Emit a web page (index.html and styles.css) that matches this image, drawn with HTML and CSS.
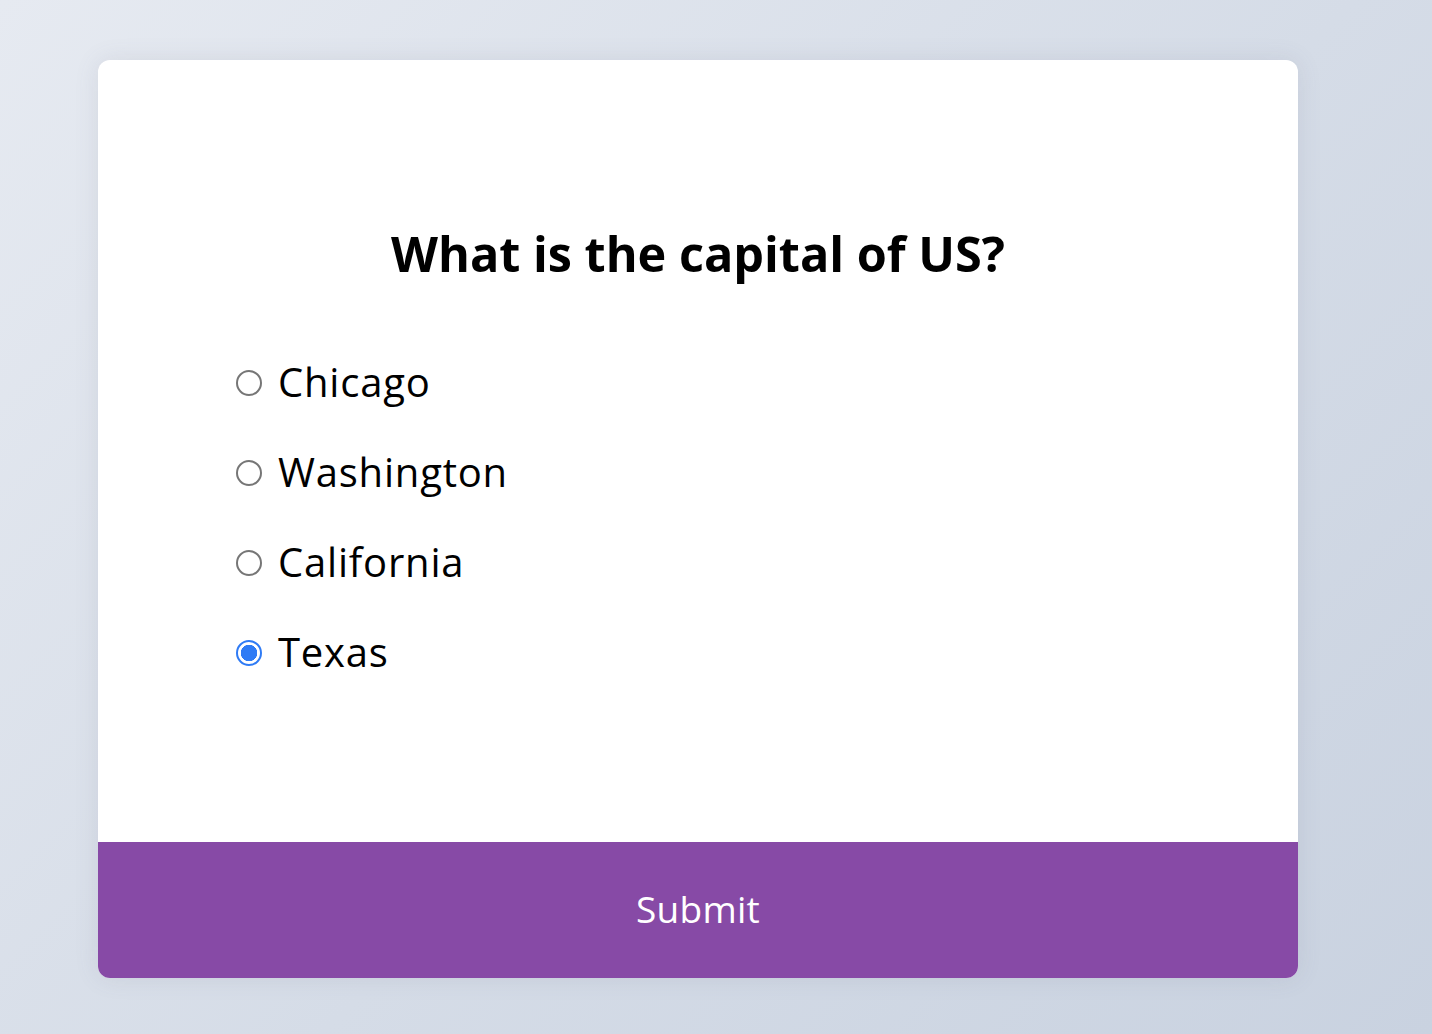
FILE: index.html
```html
<!DOCTYPE html>
<html lang="en">
<head>
<meta charset="utf-8">
<title>Quiz</title>
<link rel="stylesheet" href="styles.css">
</head>
<body>
<div class="quiz">
  <div class="quiz-body">
    <h2 class="question">What is the capital of US?</h2>
    <ul class="answers">
      <li class="answer"><input type="radio" name="a" id="a1" class="radio"><label for="a1">Chicago</label></li>
      <li class="answer"><input type="radio" name="a" id="a2" class="radio"><label for="a2">Washington</label></li>
      <li class="answer"><input type="radio" name="a" id="a3" class="radio"><label for="a3">California</label></li>
      <li class="answer"><input type="radio" name="a" id="a4" class="radio" checked><label for="a4">Texas</label></li>
    </ul>
  </div>
  <button class="submit">Submit</button>
</div>
</body>
</html>
```
FILE: styles.css
```css
html, body {
  margin: 0;
  height: 100%;
}
body {
  background: linear-gradient(135deg, #e6eaf1 0%, #d5dce7 55%, #c9d2e0 100%);
  font-family: "Open Sans", "Liberation Sans", sans-serif;
  color: #000;
  overflow: hidden;
}
.quiz {
  width: 1200px;
  margin: 60px 0 0 98px;
  background: #fff;
  border-radius: 12px;
  box-shadow: 0 0 24px rgba(100, 100, 120, 0.12);
  overflow: hidden;
}
.quiz-body {
  padding: 164px 0 144px 136px;
}
.question {
  margin: 0 136px 56px 0;
  text-align: center;
  font-size: 48.6px;
  line-height: 58px;
  font-weight: 700;
}
.answers {
  list-style: none;
  margin: 0;
  padding: 0;
}
.answer {
  height: 90px;
  display: flex;
  align-items: center;
  font-size: 40px;
  letter-spacing: 0.8px;
}
.answer label {
  margin-left: 16px;
  padding-bottom: 4px;
}
.radio {
  appearance: none;
  -webkit-appearance: none;
  margin: 0 0 0 2px;
  width: 26px;
  height: 26px;
  border: 2px solid #767676;
  border-radius: 50%;
  box-sizing: border-box;
  background: #fff;
}
.radio:checked {
  border-color: #2f7bf5;
  background: radial-gradient(circle, #2f7bf5 0 8px, #fff 8.5px);
}
.submit {
  display: block;
  width: 100%;
  height: 136px;
  border: none;
  background: #874aa6;
  color: #fff;
  font-family: "Open Sans", "Liberation Sans", sans-serif;
  font-size: 37px;
  letter-spacing: 0.3px;
  padding: 0 0 4px;
}
```
